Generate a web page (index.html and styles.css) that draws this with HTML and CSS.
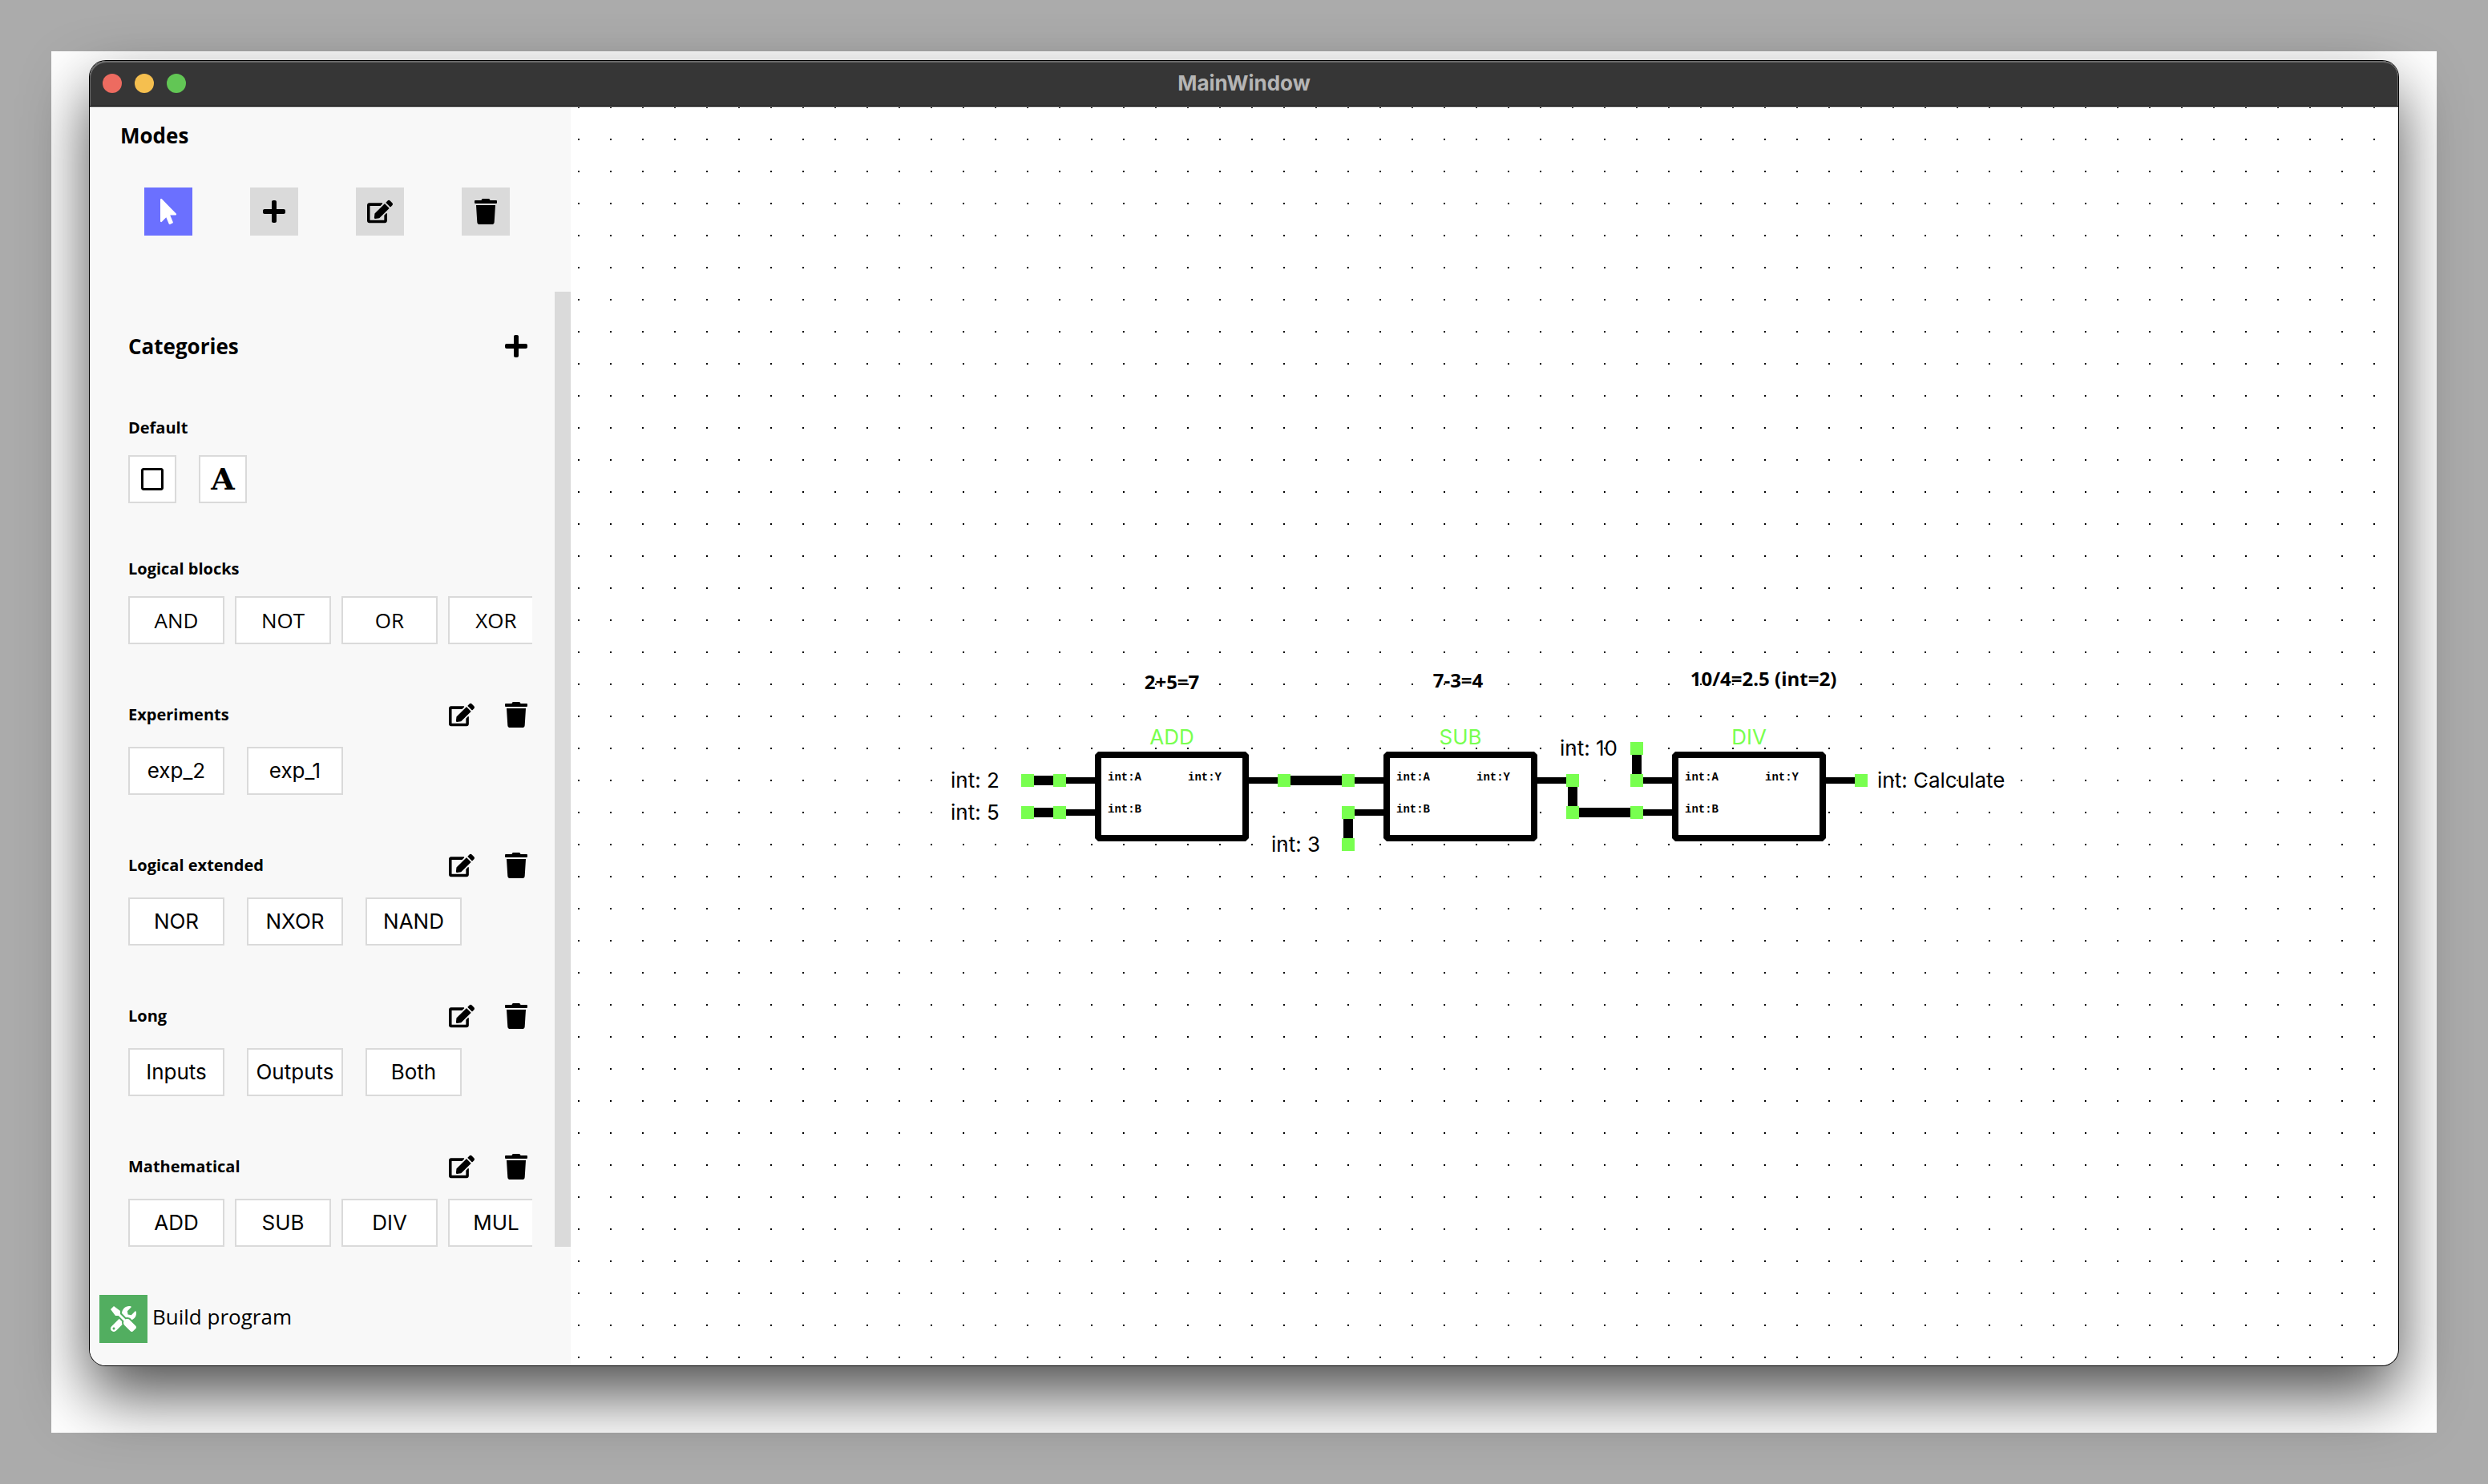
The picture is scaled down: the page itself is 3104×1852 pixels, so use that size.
FILE: index.html
```html
<!DOCTYPE html>
<html lang="en">
<head>
<meta charset="utf-8">
<title>MainWindow</title>
<link rel="stylesheet" href="styles.css">
</head>
<body>
<svg class="sprite" aria-hidden="true">
  <symbol id="i-pointer" viewBox="0 0 320 512"><path d="M302.189 329.126H196.105l55.831 135.993c3.889 9.428-.555 19.999-9.444 23.999l-49.165 21.427c-9.165 4-19.443-.571-23.332-9.714l-53.053-129.136-86.664 89.138C18.729 472.71 0 463.554 0 447.977V18.299C0 1.899 19.921-6.096 30.277 5.443l284.412 292.542c11.472 11.179 3.007 31.141-12.5 31.141z"/></symbol>
  <symbol id="i-plus" viewBox="0 0 448 512"><path d="M416 208H272V64c0-17.67-14.33-32-32-32h-32c-17.67 0-32 14.33-32 32v144H32c-17.67 0-32 14.33-32 32v32c0 17.67 14.33 32 32 32h144v144c0 17.67 14.33 32 32 32h32c17.67 0 32-14.33 32-32V304h144c17.67 0 32-14.33 32-32v-32c0-17.67-14.33-32-32-32z"/></symbol>
  <symbol id="i-edit" viewBox="0 0 576 512"><path d="M402.6 83.2l90.2 90.2c3.8 3.8 3.8 10 0 13.8L274.4 405.6l-92.8 10.3c-12.4 1.4-22.9-9.1-21.5-21.5l10.3-92.8L388.8 83.2c3.8-3.8 10-3.8 13.8 0zm162-22.9l-48.8-48.8c-15.2-15.2-39.9-15.2-55.2 0l-35.4 35.4c-3.8 3.8-3.8 10 0 13.8l90.2 90.2c3.8 3.8 10 3.8 13.8 0l35.4-35.4c15.2-15.3 15.2-40 0-55.2zM384 346.2V448H64V128h229.8c3.2 0 6.2-1.3 8.5-3.5l40-40c7.6-7.6 2.2-20.5-8.5-20.5H48C21.5 64 0 85.5 0 112v352c0 26.5 21.5 48 48 48h352c26.5 0 48-21.5 48-48V306.2c0-10.7-12.9-16-20.5-8.5l-40 40c-2.2 2.3-3.5 5.3-3.5 8.5z"/></symbol>
  <symbol id="i-trash" viewBox="0 0 448 512"><path d="M432 32H312l-9.4-18.7A24 24 0 0 0 281.1 0H166.8a23.72 23.72 0 0 0-21.4 13.3L136 32H16A16 16 0 0 0 0 48v32a16 16 0 0 0 16 16h416a16 16 0 0 0 16-16V48a16 16 0 0 0-16-16zM32 128l21.2 339a48 48 0 0 0 47.9 45h245.8a48 48 0 0 0 47.9-45L416 128z"/></symbol>
  <symbol id="i-square" viewBox="0 0 448 512"><path d="M400 32H48C21.5 32 0 53.5 0 80v352c0 26.5 21.5 48 48 48h352c26.5 0 48-21.5 48-48V80c0-26.5-21.5-48-48-48zm-6 400H54c-3.3 0-6-2.7-6-6V86c0-3.3 2.7-6 6-6h340c3.3 0 6 2.7 6 6v340c0 3.3-2.7 6-6 6z"/></symbol>
  <symbol id="i-tools" viewBox="0 0 512 512"><path d="M501.1 395.7L384 278.6c-23.1-23.1-57.6-27.6-85.4-13.9L192 158.1V96L64 0 0 64l96 128h62.1l106.6 106.6c-13.6 27.8-9.2 62.3 13.9 85.4l117.1 117.1c14.6 14.6 38.2 14.6 52.7 0l52.7-52.7c14.5-14.6 14.5-38.2 0-52.7zM331.7 225c28.3 0 54.9 11 74.9 31l19.4 19.4c15.8-6.9 30.8-16.5 43.8-29.5 37.1-37.1 49.7-89.3 37.9-136.7-2.2-9-13.5-12.1-20.1-5.5l-74.4 74.4-67.9-11.3L334 98.9l74.4-74.4c6.6-6.6 3.4-17.9-5.7-20.2-47.4-11.7-99.6.9-136.6 37.9-28.5 28.5-41.9 66.1-41.2 103.6l82.1 82.1c8.1-1.9 16.5-2.9 24.7-2.9zm-103.9 82l-56.7-56.7L18.7 402.8c-25 25-25 65.5 0 90.5s65.5 25 90.5 0l123.6-123.6c-7.6-19.9-9.9-41.6-5-62.7zM64 472c-13.2 0-24-10.8-24-24 0-13.3 10.7-24 24-24s24 10.7 24 24c0 13.2-10.7 24-24 24z"/></symbol>
</svg>

<div class="desktop">
  <div class="window">
    <header class="titlebar">
      <div class="lights">
        <button class="light light-close" aria-label="Close"></button>
        <button class="light light-minimize" aria-label="Minimize"></button>
        <button class="light light-zoom" aria-label="Zoom"></button>
      </div>
      <h1 class="window-title">MainWindow</h1>
    </header>

    <div class="workspace">
      <aside class="sidebar">
        <h2 class="heading modes-heading">Modes</h2>
        <div class="modes">
          <button class="mode mode-active" aria-label="Select"><svg class="icon"><use href="#i-pointer"/></svg></button>
          <button class="mode" aria-label="Add"><svg class="icon"><use href="#i-plus"/></svg></button>
          <button class="mode" aria-label="Edit"><svg class="icon"><use href="#i-edit"/></svg></button>
          <button class="mode" aria-label="Delete"><svg class="icon"><use href="#i-trash"/></svg></button>
        </div>

        <div class="library">
          <div class="categories">
            <div class="section-head categories-head">
              <h2 class="heading">Categories</h2>
              <button class="tool" aria-label="Add category"><svg class="icon"><use href="#i-plus"/></svg></button>
            </div>

            <section class="category">
              <div class="section-head"><h3 class="label">Default</h3></div>
              <div class="blocks">
                <button class="block block-icon" aria-label="Rectangle"><svg class="icon"><use href="#i-square"/></svg></button>
                <button class="block block-icon block-letter">A</button>
              </div>
            </section>

            <section class="category">
              <div class="section-head"><h3 class="label">Logical blocks</h3></div>
              <div class="blocks blocks-tight blocks-builtin">
                <button class="block">AND</button>
                <button class="block">NOT</button>
                <button class="block">OR</button>
                <button class="block">XOR</button>
              </div>
            </section>

            <section class="category">
              <div class="section-head">
                <h3 class="label">Experiments</h3>
                <div class="tools">
                  <button class="tool" aria-label="Edit Experiments"><svg class="icon"><use href="#i-edit"/></svg></button>
                  <button class="tool" aria-label="Delete Experiments"><svg class="icon"><use href="#i-trash"/></svg></button>
                </div>
              </div>
              <div class="blocks">
                <button class="block">exp_2</button>
                <button class="block">exp_1</button>
              </div>
            </section>

            <section class="category">
              <div class="section-head">
                <h3 class="label">Logical extended</h3>
                <div class="tools">
                  <button class="tool" aria-label="Edit Logical extended"><svg class="icon"><use href="#i-edit"/></svg></button>
                  <button class="tool" aria-label="Delete Logical extended"><svg class="icon"><use href="#i-trash"/></svg></button>
                </div>
              </div>
              <div class="blocks">
                <button class="block">NOR</button>
                <button class="block">NXOR</button>
                <button class="block">NAND</button>
              </div>
            </section>

            <section class="category">
              <div class="section-head">
                <h3 class="label">Long</h3>
                <div class="tools">
                  <button class="tool" aria-label="Edit Long"><svg class="icon"><use href="#i-edit"/></svg></button>
                  <button class="tool" aria-label="Delete Long"><svg class="icon"><use href="#i-trash"/></svg></button>
                </div>
              </div>
              <div class="blocks">
                <button class="block">Inputs</button>
                <button class="block">Outputs</button>
                <button class="block">Both</button>
              </div>
            </section>

            <section class="category">
              <div class="section-head">
                <h3 class="label">Mathematical</h3>
                <div class="tools">
                  <button class="tool" aria-label="Edit Mathematical"><svg class="icon"><use href="#i-edit"/></svg></button>
                  <button class="tool" aria-label="Delete Mathematical"><svg class="icon"><use href="#i-trash"/></svg></button>
                </div>
              </div>
              <div class="blocks blocks-tight">
                <button class="block">ADD</button>
                <button class="block">SUB</button>
                <button class="block">DIV</button>
                <button class="block">MUL</button>
              </div>
            </section>
          </div>
          <div class="scrollbar"></div>
        </div>

        <footer class="build">
          <button class="build-button" id="build" aria-labelledby="build-label"><svg class="icon"><use href="#i-tools"/></svg></button>
          <label class="build-label" id="build-label" for="build">Build program</label>
        </footer>
      </aside>

      <main class="canvas">
        <svg class="diagram" role="img" aria-label="Block diagram">
          <defs>
            <pattern id="grid" y="-1" width="40" height="40" patternUnits="userSpaceOnUse"><rect x="9" y="0" width="2" height="2"/></pattern>
            <g id="two-in">
              <path class="lead" d="M-48 32H0M-48 72H0M184 32h48"/>
              <rect class="body" width="184" height="104"/>
              <text class="pin" x="12" y="32">int:A</text>
              <text class="pin" x="12" y="72">int:B</text>
              <text class="pin" x="112" y="32">int:Y</text>
            </g>
            <rect id="port" class="port" x="-8" y="-8" width="16" height="16"/>
          </defs>
          <rect width="100%" height="100%" fill="url(#grid)"/>

          <use href="#two-in" x="658" y="808"/>
          <use href="#two-in" x="1018" y="808"/>
          <use href="#two-in" x="1378" y="808"/>

          <path class="wire" d="M570 840h40M570 880h40M890 840h80M970 880v40M1250 840v40M1250 880h80M1330 800v40"/>

          <use href="#port" x="570" y="840"/><use href="#port" x="610" y="840"/>
          <use href="#port" x="570" y="880"/><use href="#port" x="610" y="880"/>
          <use href="#port" x="890" y="840"/><use href="#port" x="970" y="840"/>
          <use href="#port" x="970" y="880"/><use href="#port" x="970" y="920"/>
          <use href="#port" x="1250" y="840"/><use href="#port" x="1250" y="880"/>
          <use href="#port" x="1330" y="800"/><use href="#port" x="1330" y="840"/>
          <use href="#port" x="1330" y="880"/><use href="#port" x="1610" y="840"/>

          <text class="name" x="750" y="795">ADD</text>
          <text class="name" x="1110" y="795">SUB</text>
          <text class="name" x="1470" y="795">DIV</text>

          <text class="value" x="474" y="849">int: 2</text>
          <text class="value" x="474" y="889">int: 5</text>
          <text class="value" x="874" y="929">int: 3</text>
          <text class="value" x="1234" y="809">int: 10</text>
          <text class="value" x="1630" y="849">int: Calculate</text>

          <text class="note" x="750" y="726">2+5=7</text>
          <text class="note" x="1107" y="724">7-3=4</text>
          <text class="note" x="1488" y="722">10/4=2.5 (int=2)</text>
        </svg>
      </main>
    </div>
  </div>
</div>
</body>
</html>
```
FILE: styles.css
```css
* {
  box-sizing: border-box;
}

body {
  margin: 0;
  min-height: 100vh;
  padding: 64px;
  display: flex;
  flex-direction: column;
  background: #ababab;
  color: #000;
  font-family: "Open Sans", sans-serif;
  font-size: 26px;
  line-height: 26px;
}

h1, h2, h3 {
  margin: 0;
}

button {
  padding: 0;
  border: 0;
  background: none;
  color: inherit;
  font: inherit;
}

.sprite {
  display: none;
}

.icon {
  display: block;
  width: 32px;
  height: 32px;
  fill: currentColor;
}

.desktop {
  flex: 1;
  display: flex;
  padding: 12px 48px 84px;
  background: #fff;
}

.window {
  flex: 1;
  display: flex;
  flex-direction: column;
  min-width: 0;
  overflow: hidden;
  border-radius: 20px;
  background: #fff;
  box-shadow: 0 0 0 1px #000, 0 36px 80px rgba(0, 0, 0, 0.7);
}

/* Title bar */

.titlebar {
  display: grid;
  grid-template-columns: 1fr auto 1fr;
  align-items: center;
  height: 57px;
  padding: 0 16px;
  border-bottom: 1px solid #000;
  border-radius: 20px 20px 0 0;
  background: #363636;
  box-shadow: inset 1px 2px 0 #6b6b6b, inset -1px 0 0 #6b6b6b;
}

.lights {
  display: flex;
  gap: 16px;
}

.light {
  width: 24px;
  height: 24px;
  border-radius: 50%;
}

.light-close {
  background: #ed6b60;
}

.light-minimize {
  background: #f5bf4f;
}

.light-zoom {
  background: #62c655;
}

.window-title {
  color: #b5b5b5;
  font-family: Inter, sans-serif;
  font-size: 26px;
  font-weight: 700;
}

.workspace {
  flex: 1;
  display: flex;
  min-height: 0;
  border-top: 1px solid #b4b4b4;
}

/* Sidebar */

.sidebar {
  flex: none;
  display: flex;
  flex-direction: column;
  width: 600px;
  background: #f8f8f8;
}

.heading {
  font-size: 26px;
  font-weight: 700;
}

.modes-heading {
  padding: 22px 0 0 38px;
}

.modes {
  display: flex;
  gap: 72px;
  padding: 52px 68px 70px;
}

.mode {
  display: grid;
  place-items: center;
  width: 60px;
  height: 60px;
  background: #dadada;
}

.mode-active {
  background: #6b70ff;
  color: #fff;
}

.library {
  flex: 1;
  display: flex;
  justify-content: space-between;
  min-height: 0;
  padding-left: 48px;
}

.categories {
  width: 504px;
  overflow: hidden;
  padding-top: 52px;
}

.scrollbar {
  width: 20px;
  background: #dadada;
}

.section-head {
  display: flex;
  align-items: center;
  justify-content: space-between;
  padding-right: 4px;
}

.categories-head {
  margin-bottom: 76px;
}

.label {
  font-size: 20px;
  line-height: 20px;
  font-weight: 700;
}

.tools {
  display: flex;
  gap: 36px;
}

.category {
  display: flex;
  flex-direction: column;
  gap: 24px;
  margin-bottom: 72px;
}

.category:last-child {
  margin-bottom: 0;
}

.blocks {
  display: flex;
  gap: 28px;
  font-family: Inter, sans-serif;
}

.blocks-tight {
  gap: 13px;
}

.blocks-builtin {
  font-family: "Open Sans", sans-serif;
}

.block {
  flex: none;
  display: grid;
  place-items: center;
  width: 120px;
  height: 60px;
  border: 2px solid #dadada;
  background: #fff;
}

.block-icon {
  width: 60px;
}

.block-letter {
  font-family: "DejaVu Serif", serif;
  font-size: 38px;
  font-weight: 700;
}

.build {
  display: flex;
  align-items: center;
  gap: 6px;
  padding: 60px 12px 28px;
}

.build-button {
  display: grid;
  place-items: center;
  width: 60px;
  height: 60px;
  background: #52ae60;
  color: #fff;
}

.build-label {
  padding-bottom: 6px;
}

/* Canvas */

.canvas {
  flex: 1;
  display: flex;
  min-width: 0;
}

.diagram {
  flex: 1;
  min-width: 0;
}

.body {
  fill: #fff;
  stroke: #000;
  stroke-width: 8px;
  stroke-linejoin: bevel;
}

.lead {
  stroke: #000;
  stroke-width: 8px;
}

.wire {
  fill: none;
  stroke: #000;
  stroke-width: 12px;
}

.port {
  fill: #78ff4f;
}

.pin {
  font-family: "Liberation Mono", monospace;
  font-size: 14px;
  font-weight: 700;
}

.name {
  fill: #78ff4f;
  font-family: Inter, sans-serif;
  font-size: 26px;
  text-anchor: middle;
}

.value {
  font-family: Inter, sans-serif;
  font-size: 26px;
}

.note {
  font-size: 24px;
  font-weight: 700;
  text-anchor: middle;
}
```
